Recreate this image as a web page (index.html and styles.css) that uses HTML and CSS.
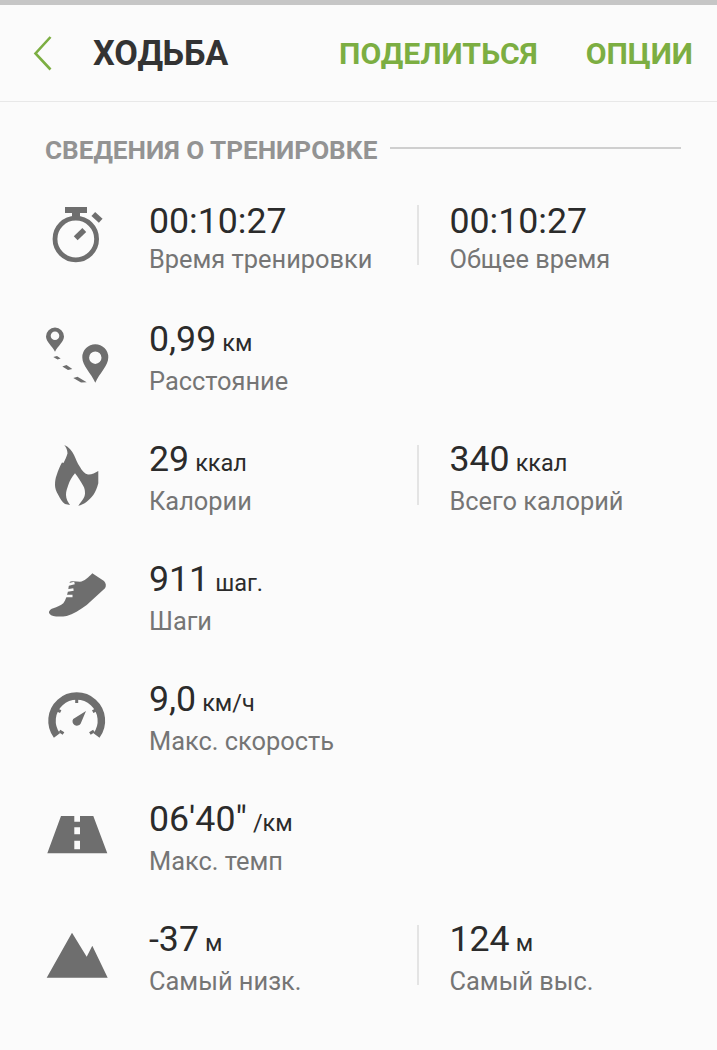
FILE: index.html
```html
<!DOCTYPE html>
<html lang="ru">
<head>
    <meta charset="UTF-8">
    <meta name="viewport" content="width=device-width, initial-scale=1.0">
    <title>Ходьба</title>
    <link rel="stylesheet" href="styles.css">
</head>
<body>
    <div class="status-strip"></div>
    <header class="app-bar">
        <svg class="back-icon" width="24" height="36" viewBox="0 0 24 36">
            <path d="M19.500 2 L4.500 18.500 L19.500 34.500" fill="none" stroke="#7cae42" stroke-width="2.600"/>
        </svg>
        <h1 class="app-title">ХОДЬБА</h1>
        <a class="action share">ПОДЕЛИТЬСЯ</a>
        <a class="action">ОПЦИИ</a>
    </header>

    <div class="section-head">
        <h2>СВЕДЕНИЯ О ТРЕНИРОВКЕ</h2>
        <div class="section-line"></div>
    </div>

    <div class="stats">
        <div class="row">
            <div class="icon-cell">
                <svg class="icon" viewBox="0 0 120 120">
                    <path d="M65 27 H87 V33 H80 V38 H72 V33 H65 Z"/>
                    <circle class="line" cx="75.800" cy="59" r="20.800" stroke-width="4.800"/>
                    <path class="line" d="M75.700 58.300 L84.300 50" stroke-width="5.500"/>
                    <path class="line" d="M93.300 34 L100.700 40.700" stroke-width="5.500"/>
                </svg>
            </div>
            <div class="cell">
                <div class="value">00:10:27</div>
                <div class="label">Время тренировки</div>
            </div>
            <div class="divider"></div>
            <div class="cell second">
                <div class="value">00:10:27</div>
                <div class="label">Общее время</div>
            </div>
        </div>

        <div class="row">
            <div class="icon-cell">
                <svg class="icon" viewBox="0 0 120 120">
                    <path fill-rule="evenodd" d="M55 51.700 C52 46 46 41.500 46 36.500 A9 9 0 0 1 64 36.500 C64 41.500 58 46 55 51.700 Z M55 31.500 A4.300 4.300 0 1 0 55 40.100 A4.300 4.300 0 1 0 55 31.500 Z"/>
                    <path fill-rule="evenodd" d="M95.300 82.700 C91 73 82.300 66 82.300 57.300 A13 13 0 0 1 108.300 57.300 C108.300 66 99.600 73 95.300 82.700 Z M95.300 51.500 A6.200 6.200 0 1 0 95.300 63.900 A6.200 6.200 0 1 0 95.300 51.500 Z"/>
                    <path d="M53.300 57 L57 56 L60.700 58.500 L57.500 59.500 Z M62.300 66.500 L66.500 65 L72.300 69 L68 70 Z M73.300 78 L77.500 76.700 L86.700 82.300 L81 82.500 Z"/>
                </svg>
            </div>
            <div class="cell">
                <div class="value">0,99<span class="unit">км</span></div>
                <div class="label">Расстояние</div>
            </div>
        </div>

        <div class="row">
            <div class="icon-cell">
                <svg class="icon" viewBox="0 0 120 120">
                    <path d="M64.300 25 C69 27 72 31 74 35 C76 39 77 43 80 47 C82 51 85 54 88 54.500 C91 55 95 53 98.300 51 L98.300 63.300 C97 68 95.500 72 93.300 75 C91 78 89 80 86.700 81.700 C84 84 81 85 78.300 85.700 C81 82 85 78 85 73.300 C85 70 84.500 68 83.300 66 C81 62 78 57 75 53.300 C72 57 69.500 61 68.300 65 C67 69 66 71 66 75 C66 79 68 82 70 85 L65 84 C62 82 60 78 58.300 75 C56 71 55 68 55 65 C55 61 55.500 58 56.700 55 C58 51 60 46 62 42.500 L63.500 43 C65 40 66.500 37 67.500 33.500 C67.500 30 66 27 64.300 25 Z"/>
                </svg>
            </div>
            <div class="cell">
                <div class="value">29<span class="unit">ккал</span></div>
                <div class="label">Калории</div>
            </div>
            <div class="divider"></div>
            <div class="cell second">
                <div class="value">340<span class="unit">ккал</span></div>
                <div class="label">Всего калорий</div>
            </div>
        </div>

        <div class="row">
            <div class="icon-cell">
                <svg class="icon" viewBox="0 0 120 120">
                    <path d="M92.300 33.300 L104 41 C106 43 106.500 46 105 48.300 L86.700 65 C80 70 73 74 66.700 76 C61 77 56 76.500 53.300 76 C50 75 48.500 73 49 71.700 C50 70 51 69 53.300 68.300 C57 67 61 65.500 63.300 63.300 C66 60 67 55 68.300 50 C68.500 47 69 44 70 41.700 C73 41 77 41.500 80 41.700 C84 41.500 89 37 92.300 33.300 Z"/>
                    <path class="lace" d="M67.500 44.800 L74.500 43 M67.500 50.500 L73.500 49.500 M65.500 56 L72.500 56"/>
                </svg>
            </div>
            <div class="cell">
                <div class="value">911<span class="unit">шаг.</span></div>
                <div class="label">Шаги</div>
            </div>
        </div>

        <div class="row">
            <div class="icon-cell">
                <svg class="icon" viewBox="0 0 120 120">
                    <path class="line" d="M56.900 75.500 A24.700 24.700 0 1 1 96.500 75.500" stroke-width="7.500"/>
                    <path class="line" d="M76.700 36 V43 M56 49.300 L60.700 51.700 M97.400 49.300 L92.700 51.700 M59.500 71 L63.500 73.500 M93.900 71 L89.900 73.500" stroke-width="3"/>
                    <path d="M86 51 L80.600 63.700 A4.400 4.400 0 0 1 73.200 58.900 Z"/>
                </svg>
            </div>
            <div class="cell">
                <div class="value">9,0<span class="unit">км/ч</span></div>
                <div class="label">Макс. скорость</div>
            </div>
        </div>

        <div class="row">
            <div class="icon-cell">
                <svg class="icon" viewBox="0 0 120 120">
                    <path fill-rule="evenodd" d="M61 36 H74.300 V41.700 H80 V36 H93.300 L107.300 73.300 H47.300 Z M74.300 47.300 V54.300 H80 V47.300 Z M74.300 60.700 V69.300 H80 V60.700 Z"/>
                </svg>
            </div>
            <div class="cell">
                <div class="value">06'40"<span class="unit">/км</span></div>
                <div class="label">Макс. темп</div>
            </div>
        </div>

        <div class="row">
            <div class="icon-cell">
                <svg class="icon" viewBox="0 0 120 120">
                    <path d="M72 32.700 L86.700 56.700 L92.300 45.700 L107.700 77.700 H46.700 Z"/>
                </svg>
            </div>
            <div class="cell">
                <div class="value">-37<span class="unit">м</span></div>
                <div class="label">Самый низк.</div>
            </div>
            <div class="divider"></div>
            <div class="cell second">
                <div class="value">124<span class="unit">м</span></div>
                <div class="label">Самый выс.</div>
            </div>
        </div>
    </div>
</body>
</html>
```

FILE: styles.css
```css
body {
    margin: 0;
    background-color: #fbfbfb;
    font-family: Roboto, "Liberation Sans", sans-serif;
    height: 1050px;
    overflow: hidden;
}
.status-strip {
    height: 5px;
    background-color: #c6c6c6;
}
.app-bar {
    display: flex;
    align-items: center;
    height: 96px;
    border-bottom: 1px solid #e8e8e8;
}
.back-icon {
    margin-left: 31px;
    flex-shrink: 0;
}
.app-title {
    margin: 0 0 0 38px;
    font-size: 34.300px;
    font-weight: 700;
    color: #333333;
    flex: 1;
}
.action {
    font-size: 30.200px;
    font-weight: 700;
    color: #7cae42;
    margin-right: 24px;
}
.share {
    margin-right: 48px;
}
.section-head {
    display: flex;
    align-items: center;
    gap: 13px;
    margin: 30px 36px 0 45px;
    height: 36px;
}
.section-head h2 {
    margin: 0;
    font-size: 26.100px;
    font-weight: 700;
    color: #939393;
    white-space: nowrap;
}
.section-line {
    flex: 1;
    height: 2px;
    margin-bottom: 5px;
    background-color: #cfcfcf;
}
.stats {
    margin-top: 12px;
}
.row {
    display: flex;
    align-items: center;
    height: 120px;
}
.icon-cell {
    width: 149px;
    flex-shrink: 0;
}
.icon {
    display: block;
    width: 120px;
    height: 120px;
    fill: #6e6e6e;
}
.line {
    fill: none;
    stroke: #6e6e6e;
}
.lace {
    fill: none;
    stroke: #fbfbfb;
    stroke-width: 2.500;
}
.cell {
    width: 262px;
    flex-shrink: 0;
}
.divider {
    width: 2px;
    height: 60px;
    margin: 0 0 10px 6px;
    background-color: #e4e4e4;
}
.second {
    width: auto;
    padding-left: 30.500px;
}
.value {
    font-size: 35.700px;
    line-height: 40px;
    color: #2b2b2b;
}
.unit {
    font-size: 23.500px;
    margin-left: 6px;
}
.label {
    margin-top: -2px;
    font-size: 25.400px;
    line-height: 40px;
    color: #757575;
}
```
